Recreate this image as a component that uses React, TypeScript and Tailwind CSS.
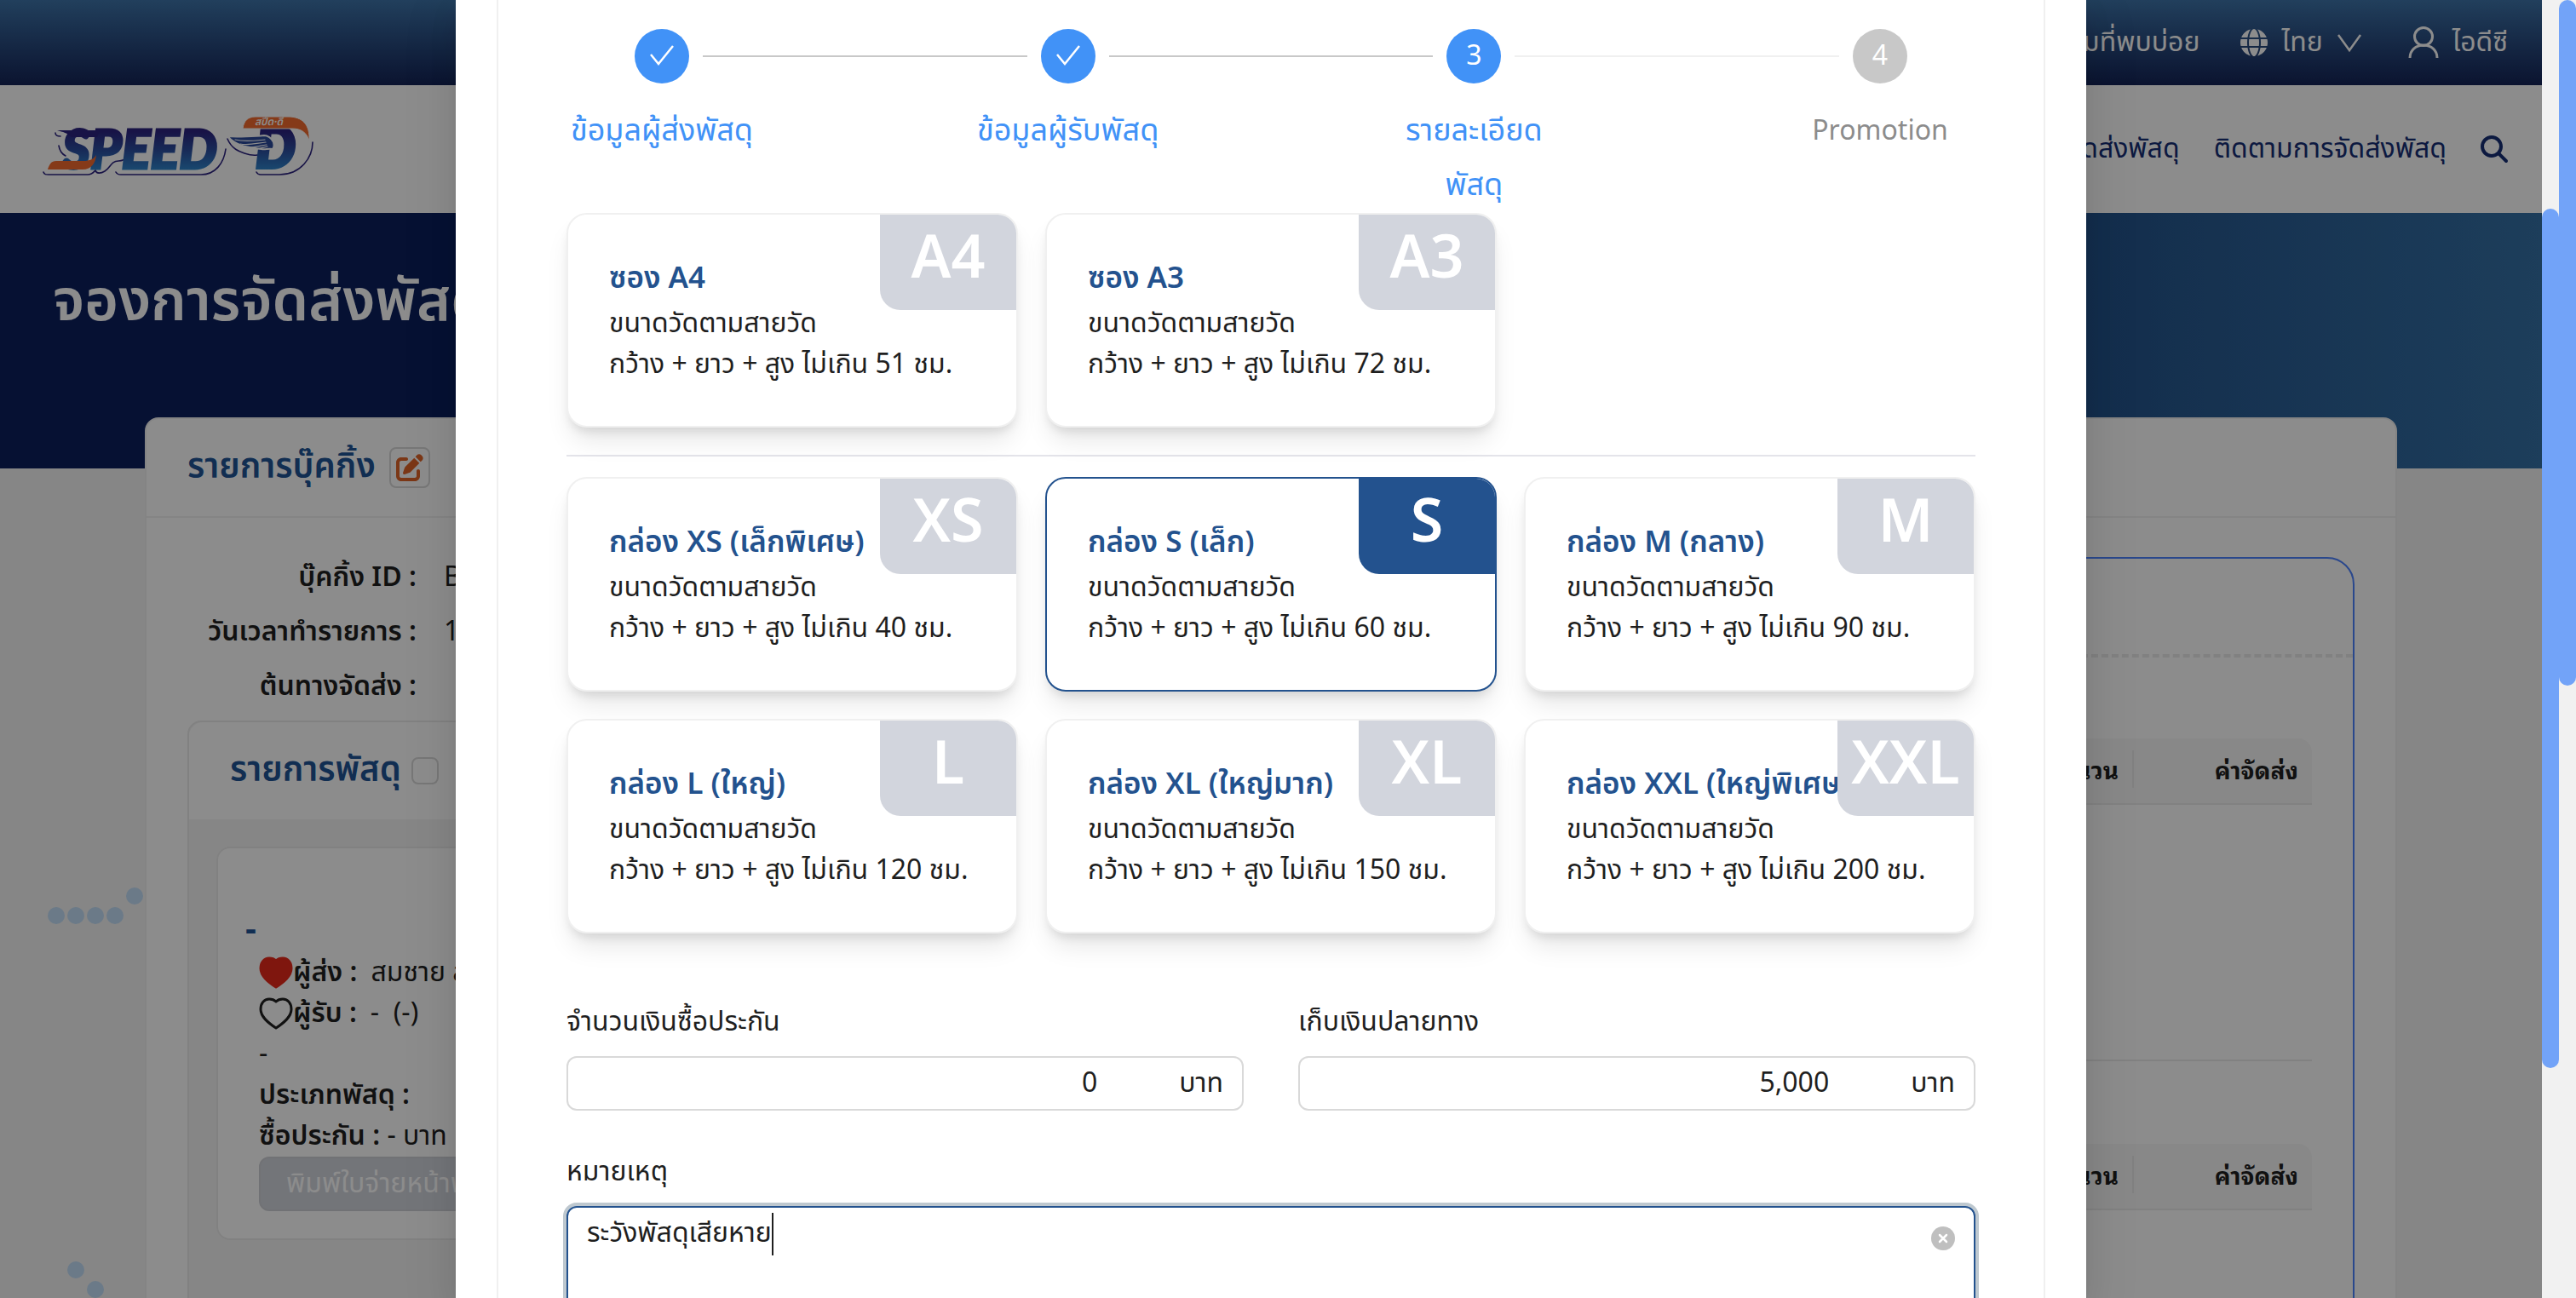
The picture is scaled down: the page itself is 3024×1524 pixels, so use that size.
import { FaGlobe, FaMagnifyingGlass, FaPenToSquare } from "react-icons/fa6";

type Size = { code: string; title: string; limit: number; selected?: boolean };

const envelopes: Size[] = [
  { code: "A4", title: "ซอง A4", limit: 51 },
  { code: "A3", title: "ซอง A3", limit: 72 },
];

const boxes: Size[] = [
  { code: "XS", title: "กล่อง XS (เล็กพิเศษ)", limit: 40 },
  { code: "S", title: "กล่อง S (เล็ก)", limit: 60, selected: true },
  { code: "M", title: "กล่อง M (กลาง)", limit: 90 },
  { code: "L", title: "กล่อง L (ใหญ่)", limit: 120 },
  { code: "XL", title: "กล่อง XL (ใหญ่มาก)", limit: 150 },
  { code: "XXL", title: "กล่อง XXL (ใหญ่พิเศษ)", limit: 200 },
];

const steps = [
  { label: "ข้อมูลผู้ส่งพัสดุ", state: "done" },
  { label: "ข้อมูลผู้รับพัสดุ", state: "done" },
  { label: "รายละเอียดพัสดุ", state: "current" },
  { label: "Promotion", state: "waiting" },
];

function Logo() {
  return (
    <svg viewBox="0 0 340 110" className="h-[110px] w-[340px]" role="img" aria-label="SPEED-D">
      <defs>
        <linearGradient id="logoBlue" gradientUnits="userSpaceOnUse" x1="0" y1="34" x2="0" y2="80">
          <stop offset="0" stopColor="#2c2380" />
          <stop offset="0.45" stopColor="#2b4a9c" />
          <stop offset="1" stopColor="#2f86cc" />
        </linearGradient>
      </defs>
      <g fill="none" stroke="#2c2380" strokeWidth="1.6" strokeLinecap="round">
        <path d="M11 82c1 3 3 3 6 3h46c5 0 7-3 9-5 1 4 6 4 11 1 7-4 7-12 16-12 5 0 8-2 10-5" />
        <path d="M96 82c1 2 3 3 6 3h94c18 0 27-15 29-30" />
        <path d="M25 36c0 3 3 4 6 4M29 51c1 6 4 10 8 12" />
        <path d="M227 43c5 12 14 15 20 17 6 2 10 3 15 2" />
        <path d="M261 82c1 2 2 3 5 3h22c25 0 39-20 39-38" />
      </g>
      <text x="33" y="78" fontFamily="Lato, sans-serif" fontWeight="900" fontStyle="italic" fontSize="63" fill="url(#logoBlue)" stroke="url(#logoBlue)" strokeWidth="3">
        SPEED
      </text>
      <path d="M27 33h50l-3 8H44c-5-5-10-6-17-8z" fill="#2c2380" />
      <path d="M16 79c2-6 4-10 10-10h32c7 0 12-2 15-7-1 10-6 17-16 17z" fill="#f26a2e" />
      <text x="260" y="77" fontFamily="Lato, sans-serif" fontWeight="900" fontStyle="italic" fontSize="66" fill="url(#logoBlue)" stroke="url(#logoBlue)" strokeWidth="4">
        D
      </text>
      <path d="M245 31c1-9 6-14 15-14h38c17 0 26 9 25 28-3-9-9-14-20-14z" fill="#f26a2e" stroke="#fff" strokeWidth="1" />
      <path d="M227 40c10 1 34 0 43-1 4 0 9 3 11 8 1 4 0 7-1 8-5-1-9 1-13 0-14-2-28-2-40-15z" fill="#2b4a9c" stroke="#fff" strokeWidth="2" />
      <g fill="none" stroke="#fff" strokeWidth="1.2" strokeLinecap="round">
        <path d="M236 44c12 3 24 1 35 0" />
        <path d="M242 49c10 2 20-1 30-2" />
        <path d="M249 53c9 1 16-2 24-3" />
        <path d="M258 55c6 0 11-2 16-3" />
      </g>
      <text x="259" y="27" fontFamily="'Noto Sans Thai', sans-serif" fontWeight="600" fontStyle="italic" fontSize="12" fill="#fff">
        สปีด·ดี
      </text>
    </svg>
  );
}

function Dots() {
  const spots = [[26, 45], [49, 45], [72, 45], [95, 45], [118, 22], [49, 461], [72, 484]];
  return (
    <svg viewBox="0 0 130 500" className="absolute left-10 top-[1030px] h-[500px] w-[130px]" aria-hidden="true">
      {spots.map(([x, y]) => (
        <circle key={`${x}-${y}`} cx={x} cy={y} r="10" fill="#c3def7" />
      ))}
    </svg>
  );
}

function Heart({ filled = false }: { filled?: boolean }) {
  return (
    <svg viewBox="0 0 40 38" className="h-[38px] w-10 shrink-0" aria-hidden="true">
      <path
        d="M20 5C23 2 26 2 28 2c6 0 10 5 10 12 0 9-9 16-18 22C11 30 2 23 2 14 2 7 6 2 12 2c2 0 5 0 8 3z"
        fill={filled ? "#e8281a" : "none"}
        stroke={filled ? "#e8281a" : "#1f1f1f"}
        strokeWidth="3"
        strokeLinejoin="round"
      />
    </svg>
  );
}

function TopBar() {
  return (
    <>
      <div className="flex h-[100px] items-center justify-end bg-linear-to-b from-[#3e74a9] to-[#152457] px-10 text-white">
        <a href="#faq" className="mr-12 whitespace-nowrap">คำถามที่พบบ่อย</a>
        <FaGlobe className="mr-4 size-8" />
        <button type="button" className="mr-[54px] flex items-center gap-4">
          ไทย
          <svg viewBox="0 0 30 24" className="h-6 w-[30px]" fill="none" stroke="currentColor" strokeWidth="2.5" aria-hidden="true">
            <path d="M2 3l13 18L28 3" />
          </svg>
        </button>
        <a href="#account" className="flex items-center gap-4">
          <svg viewBox="0 0 36 40" className="h-10 w-9" fill="none" stroke="currentColor" strokeWidth="3" aria-hidden="true">
            <circle cx="18" cy="13" r="10.5" />
            <path d="M2 38c0-9 7-15 16-15s16 6 16 15" />
          </svg>
          ไอดีซี
        </a>
      </div>
      <nav className="flex h-[150px] items-center justify-between bg-white px-10 text-[#162f76]">
        <a href="#home"><Logo /></a>
        <div className="flex items-center gap-10">
          <a href="#booking">จองการจัดส่งพัสดุ</a>
          <a href="#tracking">ติดตามการจัดส่งพัสดุ</a>
          <button type="button" aria-label="ค้นหา"><FaMagnifyingGlass className="size-8" /></button>
        </div>
      </nav>
    </>
  );
}

function ChargeTable() {
  return (
    <table className="w-full table-fixed font-['Noto_Sans_Thai_Looped','Noto_Sans_Thai',sans-serif] text-[28px] leading-[44px]">
      <thead>
        <tr className="h-[77px] border-b-2 border-[#ececec] font-bold">
          <th className="rounded-tl-2xl bg-[#f8f8f8] px-4 pb-1 text-left">รายการ</th>
          <th className="w-[240px] bg-[#f8f8f8] pb-4 pt-3">
            <div className="border-r-2 border-[#ececec] pr-4 text-right">จำนวน</div>
          </th>
          <th className="w-[209px] rounded-tr-2xl bg-[#f8f8f8] px-4 pb-1 text-right">ค่าจัดส่ง</th>
        </tr>
      </thead>
      <tbody>
        <tr className="h-[301px] border-b-2 border-[#ececec]">
          <td colSpan={3} />
        </tr>
      </tbody>
    </table>
  );
}

function BookingPage() {
  const facts = [["บุ๊คกิ้ง ID :", "BK1700"], ["วันเวลาทำรายการ :", "17/11"], ["ต้นทางจัดส่ง :", ""]];
  return (
    <div className="min-h-full bg-[#f5f5f5]">
      <TopBar />
      <header className="h-[300px] bg-linear-to-r from-[#0b1f5d] from-50% to-[#3571a6] px-[62px] pt-[52px]">
        <h1 className="text-[68px] font-semibold leading-[108px] text-white">จองการจัดส่งพัสดุ</h1>
      </header>
      <Dots />
      <main className="relative mx-[170px] -mt-[60px] rounded-2xl border-2 border-[#f0f0f0] bg-white">
        <div className="flex h-[116px] items-center gap-4 border-b-2 border-[#f0f0f0] px-12">
          <h2 className="text-[40px] font-semibold leading-[60px] text-[#1f5596]">รายการบุ๊คกิ้ง</h2>
          <button type="button" aria-label="แก้ไข" className="flex size-12 items-center justify-center rounded-lg border-2 border-[#d9d9d9] text-[#e16428]">
            <FaPenToSquare className="size-8" />
          </button>
        </div>
        <div className="grid grid-cols-[2fr_3fr] gap-8 px-12 pt-[38px]">
          <section>
            <dl className="leading-[64px]">
              {facts.map(([term, value]) => (
                <div key={term} className="flex gap-8">
                  <dt className="w-[269px] whitespace-nowrap text-right font-semibold">{term}</dt>
                  <dd>{value}</dd>
                </div>
              ))}
            </dl>
            <div className="mt-2 rounded-2xl border-2 border-[#ececec] bg-[#f5f5f5]">
              <label className="flex h-[114px] items-center gap-3 rounded-t-2xl bg-white px-12 text-[40px] font-semibold text-[#1f5596]">
                รายการพัสดุ
                <input type="checkbox" className="size-8 appearance-none rounded-lg border-2 border-[#d9d9d9] bg-white" />
              </label>
              <div className="p-8 pb-[120px]">
                <article className="rounded-2xl border-2 border-[#ececec] bg-white px-8 pb-8 pt-[70px] leading-[48px]">
                  <h3 className="text-[40px] font-bold leading-[52px] text-[#1f5596]">-</h3>
                  <div className="px-4">
                    <p className="flex items-center"><Heart filled /><b className="mr-4 font-semibold">ผู้ส่ง :</b> สมชาย ส่งดี</p>
                    <p className="flex items-center"><Heart /><b className="mr-4 font-semibold">ผู้รับ :</b> - &nbsp;(-)</p>
                    <p>-</p>
                    <p><b className="font-semibold">ประเภทพัสดุ :</b></p>
                    <p><b className="font-semibold">ซื้อประกัน :</b> - บาท</p>
                    <button type="button" className="h-16 rounded-xl border-2 border-[#ced0d6] bg-[#d2d5dd] px-[30px] text-white">พิมพ์ใบจ่ายหน้าพัสดุ</button>
                  </div>
                </article>
              </div>
            </div>
          </section>
          <section className="mt-2 rounded-[32px] border-2 border-[#4e83ff]">
            <div className="h-[116px] border-b-4 border-dashed border-[#ececec]" />
            <div className="flex flex-col gap-[97px] px-12 pt-[95px]">
              <ChargeTable />
              <ChargeTable />
            </div>
          </section>
        </div>
      </main>
    </div>
  );
}

function Steps() {
  return (
    <ol className="flex">
      {steps.map((step, i) => {
        const last = i === steps.length - 1;
        return (
          <li key={step.label} className={last ? "w-56" : "flex-1"}>
            <div className="ml-20 flex items-center gap-4">
              <span className={`flex size-16 shrink-0 items-center justify-center rounded-full text-white ${step.state === "waiting" ? "bg-[#c8c8c8]" : "bg-[#4192f7]"}`}>
                {step.state === "done" ? (
                  <svg viewBox="0 0 30 26" className="h-[26px] w-[30px]" fill="none" stroke="currentColor" strokeWidth="2.5" aria-hidden="true">
                    <path d="M2 11l9 11L28 1" />
                  </svg>
                ) : (
                  i + 1
                )}
              </span>
              {!last && <span className={`-mr-16 h-[2px] flex-1 ${step.state === "done" ? "bg-[#c8c8c8]" : "bg-[#f0f0f0]"}`} />}
            </div>
            <p className={`mt-6 w-56 px-1 text-center leading-[64px] ${step.state === "waiting" ? "text-[#8c8c8c]" : "text-4xl/[64px] text-[#4192f7]"}`}>{step.label}</p>
          </li>
        );
      })}
    </ol>
  );
}

function SizeCard({ size }: { size: Size }) {
  return (
    <button
      type="button"
      aria-pressed={!!size.selected}
      className={`relative overflow-hidden rounded-3xl border-2 bg-white p-12 text-left leading-[48px] shadow-[0_20px_30px_-6px_rgba(0,0,0,0.1),0_8px_12px_-4px_rgba(0,0,0,0.1)] ${size.selected ? "border-[#23528e]" : "border-[#f0f0f0]"}`}
    >
      <span className="block whitespace-nowrap text-[35px] font-semibold leading-[56px] text-[#23528e]">{size.title}</span>
      <span className="block whitespace-nowrap">ขนาดวัดตามสายวัด</span>
      <span className="block whitespace-nowrap">กว้าง + ยาว + สูง ไม่เกิน {size.limit} ชม.</span>
      <span className={`absolute right-0 top-0 h-28 w-40 rounded-bl-3xl text-center text-[70px] font-semibold leading-[106px] text-white ${size.selected ? "bg-[#23528e]" : "bg-[#d2d5dd]"}`}>
        {size.code}
      </span>
    </button>
  );
}

function MoneyField({ id, label, value }: { id: string; label: string; value: string }) {
  return (
    <div className="flex flex-col gap-4">
      <label htmlFor={id} className="leading-[48px]">{label}</label>
      <div className="flex h-16 items-center gap-24 rounded-xl border-2 border-[#d9d9d9] px-[22px]">
        <input id={id} defaultValue={value} inputMode="numeric" className="min-w-0 flex-1 text-right outline-none" />
        <span>บาท</span>
      </div>
    </div>
  );
}

function ParcelDialog() {
  return (
    <div role="dialog" aria-label="รายละเอียดพัสดุ" className="w-full max-w-[1914px] bg-white px-12 shadow-[0_12px_32px_rgba(0,0,0,0.08),0_6px_12px_-8px_rgba(0,0,0,0.12),0_18px_56px_16px_rgba(0,0,0,0.05)]">
      <form className="border-x-2 border-[#f0f0f0] px-20 pb-20 pt-[34px]">
        <Steps />
        <div className="grid grid-cols-3 gap-8">
          {envelopes.map((s) => <SizeCard key={s.code} size={s} />)}
        </div>
        <hr className="mb-6 mt-8 border-t-2 border-[#e4e4ea]" />
        <div className="grid grid-cols-3 gap-8">
          {boxes.map((s) => <SizeCard key={s.code} size={s} />)}
        </div>
        <div className="mt-20 grid grid-cols-2 gap-16">
          <MoneyField id="insurance" label="จำนวนเงินซื้อประกัน" value="0" />
          <MoneyField id="cod" label="เก็บเงินปลายทาง" value="5,000" />
        </div>
        <div className="mt-12 flex flex-col gap-4">
          <label htmlFor="note" className="leading-[48px]">หมายเหตุ</label>
          <div className="flex h-[200px] items-start rounded-xl border-2 border-[#23528e] px-[22px] pt-[6px] ring-4 ring-[#bec8cf]">
            <textarea id="note" rows={1} defaultValue="ระวังพัสดุเสียหาย" className="field-sizing-content resize-none whitespace-nowrap leading-[48px] outline-none" />
            <span className="h-[50px] w-[2px] bg-[#1f1f1f]" />
            <button type="button" aria-label="ล้างข้อความ" className="ml-auto mt-4">
              <svg viewBox="0 0 28 28" className="size-7" aria-hidden="true">
                <circle cx="14" cy="14" r="14" fill="#bfbfbf" />
                <path d="M10 10l8 8M18 10l-8 8" stroke="#fff" strokeWidth="2.5" strokeLinecap="round" />
              </svg>
            </button>
          </div>
        </div>
      </form>
    </div>
  );
}

export default function App() {
  return (
    <div className="flex h-screen overflow-hidden bg-[#f1f1f1] font-['Noto_Sans_Thai','Noto_Sans',sans-serif] text-[32px] text-[#1f1f1f]">
      <div className="relative min-w-0 flex-1 overflow-hidden">
        <BookingPage />
        <div className="absolute inset-0 flex justify-center overflow-hidden bg-black/45">
          <ParcelDialog />
        </div>
      </div>
      <div className="flex w-5 flex-col" aria-hidden="true">
        <div className="h-[16.1%]" />
        <div className="h-[66.2%] rounded-full bg-[#72a3f8]" />
      </div>
      <div className="w-5" aria-hidden="true">
        <div className="h-[52.8%] rounded-full bg-[#72a3f8]" />
      </div>
    </div>
  );
}
